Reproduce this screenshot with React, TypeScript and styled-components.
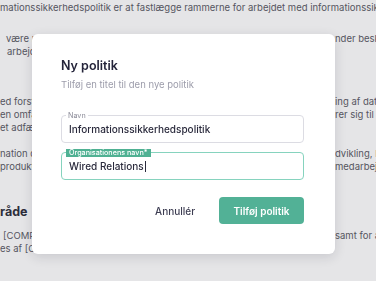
import React from "react";
import styled, { createGlobalStyle } from "styled-components";

type Row = { left?: string; right?: string; indent?: number };
type Block = { space: number; heading?: string; rows?: Row[] };

const blocks: Block[] = [
  {
    space: 1,
    rows: [
      { left: "mationssikkerhedspolitik er at fastlægge rammerne for arbejdet med informationssikkerhed" },
    ],
  },
  {
    space: 18,
    rows: [
      { left: "være m", right: "nder beskrivelsen", indent: 6 },
      { left: "arbejd", indent: 7 },
    ],
  },
  {
    space: 37,
    rows: [
      { left: "ed forstå", right: "ing af data" },
      { left: "en omfa", right: "rer sig til de" },
      { left: "et adfæ" },
    ],
  },
  {
    space: 13,
    rows: [
      { left: "nation d", right: "dvikling, levering" },
      { left: "produkt", right: " medarbejdere" },
    ],
  },
  { space: 31, heading: "råde" },
  {
    space: 9,
    rows: [
      { left: "[COMP", right: " samt for alle", indent: 3 },
      { left: "es af [C" },
    ],
  },
];

export default function App() {
  return (
    <>
      <GlobalStyle />
      <Document>
        {blocks.map((block, i) =>
          block.heading ? (
            <Heading key={i} $space={block.space}>{block.heading}</Heading>
          ) : (
            <Paragraph key={i} $space={block.space}>
              {block.rows!.map((row, j) => (
                <Line key={j}>
                  <LeftText $indent={row.indent ?? 0}>{row.left}</LeftText>
                  {row.right && <RightText>{row.right}</RightText>}
                </Line>
              ))}
            </Paragraph>
          )
        )}
      </Document>

      <Overlay>
        <Dialog>
          <Title>Ny politik</Title>
          <Subtitle>Tilføj en titel til den nye politik</Subtitle>

          <Field $space={24}>
            <FieldLabel>Navn</FieldLabel>
            Informationssikkerhedspolitik
          </Field>
          <Field $space={9} $active>
            <FieldLabel $active>Organisationens navn*</FieldLabel>
            Wired Relations
            <Caret />
          </Field>

          <Actions>
            <GhostButton>Annullér</GhostButton>
            <PrimaryButton>Tilføj politik</PrimaryButton>
          </Actions>
        </Dialog>
      </Overlay>
    </>
  );
}

const GlobalStyle = createGlobalStyle`
  html, body {
    margin: 0;
    padding: 0;
  }
  body {
    width: 376px;
    height: 281px;
    overflow: hidden;
    background: #e5e5e7;
    font-family: Inter, "Noto Sans", sans-serif;
  }
`;

const Document = styled.div`
  width: 376px;
  height: 281px;
  overflow: hidden;
  color: #55555f;
  font-size: 9.5px;
  line-height: 13px;
`;

const Paragraph = styled.div<{ $space: number }>`
  margin-top: ${(p) => p.$space}px;
`;

const Line = styled.div`
  display: grid;
  grid-template-columns: 335px max-content;
  height: 13px;
  white-space: nowrap;
`;

const LeftText = styled.span<{ $indent: number }>`
  padding-left: ${(p) => p.$indent}px;
`;

const RightText = styled.span``;

const Heading = styled.div<{ $space: number }>`
  margin-top: ${(p) => p.$space}px;
  font-size: 12.5px;
  line-height: 16px;
  font-weight: 700;
  color: #2d2d3b;
`;

const Overlay = styled.div`
  position: fixed;
  inset: 0;
  padding: 34px 0 0 32px;
`;

const Dialog = styled.div`
  box-sizing: border-box;
  width: 303px;
  height: 220px;
  padding: 24px 31px 0 29px;
  display: flex;
  flex-direction: column;
  background: #fff;
  border-radius: 6px;
  box-shadow: 0 3px 12px rgba(30, 30, 50, 0.14);
`;

const Title = styled.h2`
  margin: 0;
  font-size: 12.5px;
  line-height: 16px;
  font-weight: 600;
  color: #24243a;
`;

const Subtitle = styled.p`
  margin: 4px 0 0;
  font-size: 9.5px;
  line-height: 13px;
  color: #9d9dab;
`;

const Field = styled.div<{ $space: number; $active?: boolean }>`
  position: relative;
  box-sizing: border-box;
  height: 28px;
  margin-top: ${(p) => p.$space}px;
  padding: 0 7px;
  display: flex;
  align-items: center;
  border: 1px solid ${(p) => (p.$active ? "#86d3be" : "#dcdce3")};
  border-radius: 4px;
  font-size: 10px;
  font-weight: 500;
  color: #2a2a3c;
`;

const FieldLabel = styled.span<{ $active?: boolean }>`
  position: absolute;
  top: -4.5px;
  left: 4px;
  padding: 0 ${(p) => (p.$active ? 3 : 2)}px;
  font-size: 7.2px;
  line-height: 8px;
  font-weight: ${(p) => (p.$active ? 500 : 400)};
  color: ${(p) => (p.$active ? "#fff" : "#8b8b98")};
  background: ${(p) => (p.$active ? "#4fb193" : "#fff")};
`;

const Caret = styled.span`
  display: inline-block;
  width: 1px;
  height: 11px;
  margin-left: 1px;
  background: #2a2a3c;
`;

const Actions = styled.div`
  display: flex;
  justify-content: flex-end;
  gap: 6px;
  margin-top: 17px;
`;

const GhostButton = styled.button`
  height: 27px;
  padding: 0 18px;
  border: none;
  background: none;
  font-family: inherit;
  font-size: 10px;
  font-weight: 500;
  color: #3d3d52;
`;

const PrimaryButton = styled.button`
  width: 85px;
  height: 27px;
  border: none;
  border-radius: 4px;
  background: #52b196;
  font-family: inherit;
  font-size: 10px;
  font-weight: 600;
  color: #fff;
`;
